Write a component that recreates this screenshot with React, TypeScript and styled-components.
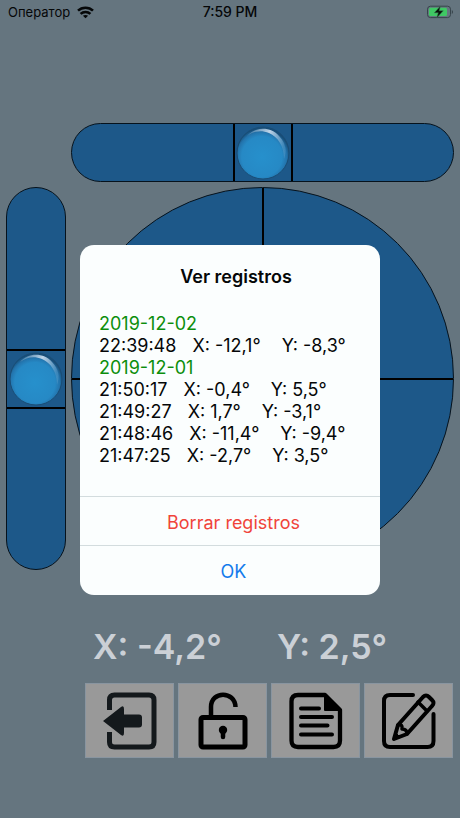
import React from "react";
import styled, { createGlobalStyle } from "styled-components";

const Global = createGlobalStyle`
  * { box-sizing: border-box; }
  body { margin: 0; background: #65757f; }
  button { font: inherit; margin: 0; padding: 0; border: 0; cursor: pointer; }
`;

const Screen = styled.div`
  position: relative;
  min-height: 100vh;
  display: flex;
  flex-direction: column;
  background: #65757f;
  color: #050708;
  font-family: Inter, "Noto Sans", sans-serif;
`;

const StatusBar = styled.header`
  display: grid;
  grid-template-columns: 1fr auto 1fr;
  align-items: center;
  height: 24px;
  padding: 0 6px;
  font-size: 13px;
  line-height: 16px;
`;

const Carrier = styled.div`
  display: flex;
  align-items: center;
  gap: 7px;
  padding-left: 2px;
`;

const Clock = styled.time`
  font-size: 14px;
  font-weight: 500;
`;

const BatterySlot = styled.div`
  display: flex;
  justify-content: flex-end;
`;

const Levels = styled.main`
  display: grid;
  grid-template-columns: 60px 1fr;
  gap: 5px;
  padding: 99px 6px 0;
`;

const Tube = styled.div<{ $vertical?: boolean }>`
  grid-column: ${(p) => (p.$vertical ? 1 : 2)};
  display: flex;
  flex-direction: ${(p) => (p.$vertical ? "column" : "row")};
  align-items: center;
  justify-content: center;
  height: ${(p) => (p.$vertical ? "auto" : "59px")};
  overflow: hidden;
  border: 1px solid #06121c;
  border-radius: 30px;
  background: #1d5889;
`;

const Center = styled.div<{ $vertical?: boolean }>`
  display: flex;
  align-items: center;
  justify-content: center;
  flex: none;
  width: ${(p) => (p.$vertical ? "100%" : "60px")};
  height: ${(p) => (p.$vertical ? "60px" : "100%")};
  border: solid #000;
  border-width: ${(p) => (p.$vertical ? "2px 0" : "0 2px")};
`;

const Dial = styled.div`
  grid-column: 2;
  aspect-ratio: 1;
  border: 1px solid #06121c;
  border-radius: 50%;
  background:
    linear-gradient(#000, #000) center / 2px 100% no-repeat,
    linear-gradient(#000, #000) center / 100% 2px no-repeat,
    #1d5889;
`;

const Footer = styled.footer`
  padding: 52px 7px 0 85px;
`;

const Readings = styled.div`
  display: grid;
  grid-template-columns: 1fr 1fr;
  column-gap: 8px;
  padding-left: 8px;
  color: #cbd0d6;
  font-size: 34px;
  font-weight: 600;
  line-height: 50px;
  white-space: nowrap;
`;

const Toolbar = styled.nav`
  display: grid;
  grid-template-columns: repeat(4, 1fr);
  gap: 4px;
  margin-top: 11px;
`;

const ToolButton = styled.button`
  display: flex;
  align-items: center;
  justify-content: center;
  height: 75px;
  border: 1px solid #8995a0;
  background: #999;
  color: #000;
`;

const Overlay = styled.div`
  position: absolute;
  inset: 0;
  display: flex;
  align-items: center;
  justify-content: center;
  padding-top: 22px;
`;

const Alert = styled.section`
  width: 300px;
  padding-bottom: 1px;
  overflow: hidden;
  border-radius: 14px;
  background: #fbfefe;
`;

const Title = styled.h1`
  margin: 0;
  padding: 20px 0 0 12px;
  font-size: 18px;
  font-weight: 600;
  line-height: 24px;
  text-align: center;
`;

const Log = styled.div`
  padding: 24px 18px 29px 19px;
  font-size: 18px;
  line-height: 22px;
`;

const Day = styled.h2`
  margin: 0;
  color: #0c8e0c;
  font-size: 18px;
  font-weight: 400;
  line-height: 22px;
`;

const Records = styled.ul`
  margin: 0;
  padding: 0;
  list-style: none;
`;

const Entry = styled.li`
  display: flex;
  white-space: nowrap;
`;

const XValue = styled.span`
  margin: 0 21px 0 16px;
`;

const AlertButton = styled.button<{ $danger?: boolean }>`
  display: block;
  width: 100%;
  height: 49px;
  && {
    padding: 2px 0 0 7px;
    border-top: 1px solid #d3dcde;
  }
  background: transparent;
  color: ${(p) => (p.$danger ? "#f0443a" : "#137bec")};
  font-size: 18px;
`;

const Bubble = ({ id }: { id: string }) => (
  <svg width="54" height="54" viewBox="0 0 54 54" aria-hidden="true">
    <defs>
      <radialGradient id={`${id}-body`} cx="48%" cy="57%" r="54%">
        <stop offset="0" stopColor="#2690cc" />
        <stop offset=".72" stopColor="#2689c5" />
        <stop offset=".88" stopColor="#2374ad" />
        <stop offset="1" stopColor="#174e79" />
      </radialGradient>
      <linearGradient id={`${id}-shine`} x1="0" y1="0" x2="1" y2=".5">
        <stop offset="0" stopColor="#b9d4e9" stopOpacity=".1" />
        <stop offset=".5" stopColor="#bed4e8" />
        <stop offset="1" stopColor="#9cc2df" stopOpacity=".2" />
      </linearGradient>
      <filter id={`${id}-soft`} x="-20%" y="-20%" width="140%" height="140%">
        <feGaussianBlur stdDeviation=".7" />
      </filter>
    </defs>
    <circle cx="27" cy="27" r="26" fill={`url(#${id}-body)`} stroke="#1a4d75" />
    <path d="M11 10C20 0 35 1 43 10C50 17 51 25 48 33C48 20 42 11 33 7C25 4 18 5 11 10Z" fill={`url(#${id}-shine)`} filter={`url(#${id}-soft)`} />
  </svg>
);

const WifiIcon = () => (
  <svg width="17" height="13" viewBox="0 0 17 13" fill="none" stroke="currentColor" strokeWidth="2.5" aria-label="Wi-Fi">
    <path d="M1 4.7C5 .7 12 .7 16 4.7" />
    <path d="M3.6 7.9C6.3 5.3 10.7 5.3 13.4 7.9" />
    <path d="M8.5 12.3L5.9 9.8C7.4 8.6 9.6 8.6 11.1 9.8Z" fill="currentColor" stroke="none" />
  </svg>
);

const BatteryIcon = () => (
  <svg width="27" height="14" viewBox="0 0 27 14" aria-label="Battery charging">
    <rect x=".5" y="1.2" width="23" height="11.4" rx="3" fill="none" stroke="#37444b" />
    <rect x="2" y="2.7" width="18" height="8.4" rx="1.5" fill="#3fc864" />
    <path d="M24.8 5v4c1.6-.6 1.6-3.4 0-4Z" fill="#37444b" />
    <path d="M13.5 1L7.3 7.8h4L9.6 13l6.7-7.2h-4.1Z" fill="#06120a" stroke="#3b7650" strokeWidth=".5" />
  </svg>
);

const ExitIcon = () => (
  <svg width="54" height="58" viewBox="0 0 54 58" fill="none" aria-hidden="true">
    <path d="M6.500 18V8Q6.500 3 11.500 3H46Q51 3 51 8V50Q51 55 46 55H11.500Q6.500 55 6.500 50V40" stroke="#14191c" strokeWidth="5" />
    <path d="M0 29L18 15Q21 13 21 17V22.500H36Q39 22.500 39 25.500V32.500Q39 35.500 36 35.500H21V41Q21 45 18 43Z" fill="#14191c" />
  </svg>
);

const UnlockIcon = () => (
  <svg width="50" height="58" viewBox="0 0 50 58" fill="none" stroke="currentColor" aria-hidden="true">
    <rect x="3" y="25.500" width="44" height="29.500" rx="2" strokeWidth="5" />
    <path d="M13 26V15C13 -1.500 37 -1.500 37.500 15" strokeWidth="4.500" />
    <circle cx="25" cy="38" r="4.200" fill="currentColor" stroke="none" />
    <path d="M25 38V45" strokeWidth="4.500" strokeLinecap="round" />
  </svg>
);

const NotesIcon = () => (
  <svg width="54" height="58" viewBox="0 0 54 58" fill="none" stroke="currentColor" strokeWidth="4.300" strokeLinecap="round" strokeLinejoin="round" aria-hidden="true">
    <path d="M36 3H9Q2.500 3 2.500 9.500V48.500Q2.500 55 9 55H44.500Q51 55 51 48.500V18Z" />
    <path d="M36 3L51 18H36Z" fill="currentColor" strokeWidth="2" />
    <path d="M12 16.500H30M12 25H43M12 33.500H38.500M12 42.500H43" strokeWidth="4" />
  </svg>
);

const EditIcon = () => (
  <svg width="54" height="58" viewBox="0 0 54 58" fill="none" stroke="currentColor" strokeWidth="4" strokeLinecap="round" strokeLinejoin="round" aria-hidden="true">
    <path d="M31 3H8Q2 3 2 9V49Q2 55 8 55H45.500Q51.500 55 51.500 49V22" />
    <path d="M12 47L16 33L41 5Q44 2 47 5L50 8Q53 11 50 14L25 42Z" />
    <path d="M36 10L45 19M16 33Q21 32 20 37Q25 37 25 42" strokeWidth="3.500" />
    <path d="M12 47L14 41L18 45Z" fill="currentColor" strokeWidth="1" />
  </svg>
);

const days = [
  { date: "2019-12-02", entries: [["22:39:48", "-12,1°", "-8,3°"]] },
  {
    date: "2019-12-01",
    entries: [
      ["21:50:17", "-0,4°", "5,5°"],
      ["21:49:27", "1,7°", "-3,1°"],
      ["21:48:46", "-11,4°", "-9,4°"],
      ["21:47:25", "-2,7°", "3,5°"],
    ],
  },
];

export default function App() {
  return (
    <Screen>
      <Global />
      <StatusBar>
        <Carrier>Оператор <WifiIcon /></Carrier>
        <Clock>7:59 PM</Clock>
        <BatterySlot><BatteryIcon /></BatterySlot>
      </StatusBar>
      <Levels>
        <Tube><Center><Bubble id="horizontal" /></Center></Tube>
        <Tube $vertical><Center $vertical><Bubble id="vertical" /></Center></Tube>
        <Dial />
      </Levels>
      <Footer>
        <Readings>
          <span>X: -4,2°</span>
          <span>Y: 2,5°</span>
        </Readings>
        <Toolbar>
          <ToolButton aria-label="Salir"><ExitIcon /></ToolButton>
          <ToolButton aria-label="Desbloquear"><UnlockIcon /></ToolButton>
          <ToolButton aria-label="Ver registros"><NotesIcon /></ToolButton>
          <ToolButton aria-label="Editar"><EditIcon /></ToolButton>
        </Toolbar>
      </Footer>
      <Overlay>
        <Alert role="alertdialog" aria-modal="true" aria-labelledby="alert-title">
          <Title id="alert-title">Ver registros</Title>
          <Log>
            {days.map((day) => (
              <React.Fragment key={day.date}>
                <Day>{day.date}</Day>
                <Records>
                  {day.entries.map(([time, x, y]) => (
                    <Entry key={time}>
                      <time>{time}</time>
                      <XValue>X: {x}</XValue>
                      <span>Y: {y}</span>
                    </Entry>
                  ))}
                </Records>
              </React.Fragment>
            ))}
          </Log>
          <AlertButton $danger>Borrar registros</AlertButton>
          <AlertButton>OK</AlertButton>
        </Alert>
      </Overlay>
    </Screen>
  );
}
